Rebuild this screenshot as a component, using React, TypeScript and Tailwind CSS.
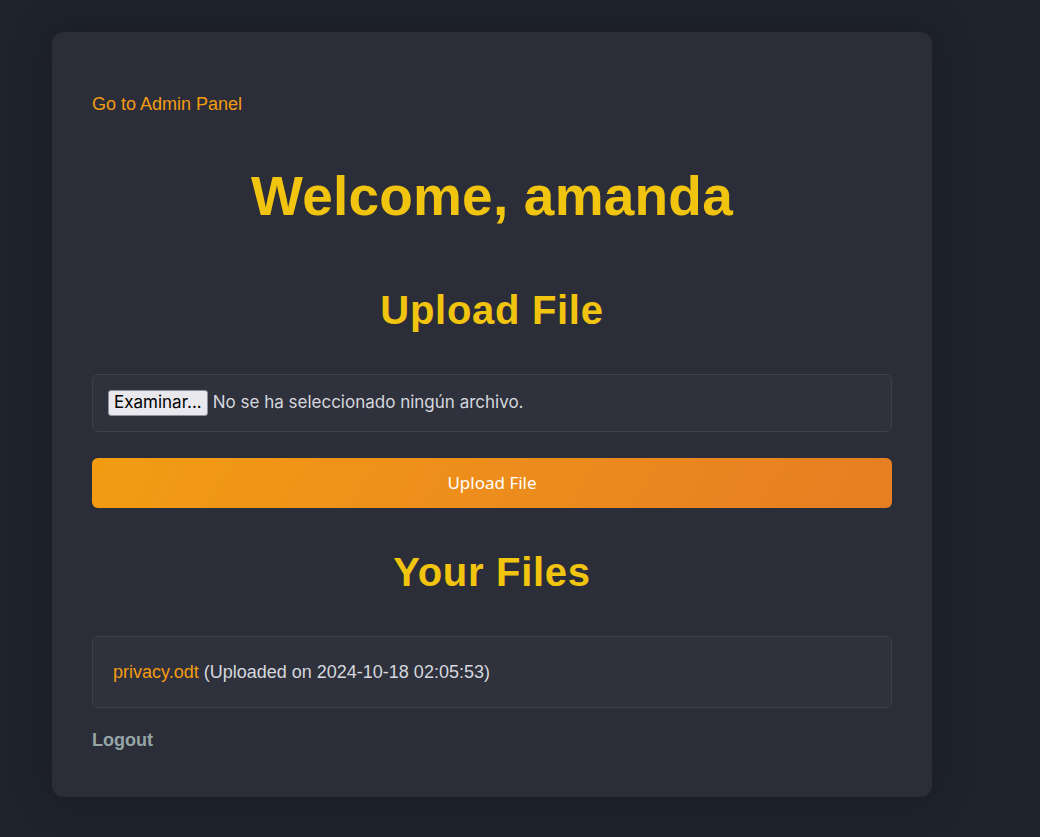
const files = [{ name: "privacy.odt", uploaded: "2024-10-18 02:05:53" }]

const App = () => {
  return (
    <div className="min-h-[837px] w-full bg-[#1f232d] pt-8 pb-10 font-['Liberation_Sans',Arial,sans-serif]">
      <div className="ml-[52px] flex w-[880px] flex-col rounded-xl bg-[#2b2d38] px-10 pt-[62px] pb-[46px] shadow-[0_0_40px_rgba(0,0,0,0.25)]">
        <a href="#" className="self-start text-[18px] leading-[21px] text-[#f39c12]">
          Go to Admin Panel
        </a>

        <h1 className="mt-[50px] text-center text-[55px] leading-[63px] font-bold tracking-[0.2px] text-[#f1c40f]">
          Welcome, amanda
        </h1>

        <h2 className="mt-[59px] text-center text-[40px] leading-[46px] font-bold tracking-[0.7px] text-[#f1c40f]">
          Upload File
        </h2>

        <div className="mt-[41px] flex h-[58px] items-center gap-[5px] rounded-md border border-[#3e4049] bg-[#2f313c] px-[15px] font-['Inter',sans-serif] text-[17px]">
          <span className="flex h-[26px] items-center rounded-[3px] border border-[#8f8f9d] bg-[#e9e9ed] px-[5px] text-black">
            Examinar...
          </span>
          <span className="text-[#d5d8de]">No se ha seleccionado ningún archivo.</span>
        </div>

        <button className="mt-[26px] h-[50px] rounded-md bg-linear-120 from-[#f39c12] to-[#e67e22] font-['Noto_Sans',sans-serif] text-[17px] text-white">
          Upload File
        </button>

        <h2 className="mt-[41px] text-center text-[40px] leading-[46px] font-bold tracking-[0.7px] text-[#f1c40f]">
          Your Files
        </h2>

        <ul className="mt-[41px] flex flex-col gap-2">
          {files.map((f) => (
            <li
              key={f.name}
              className="flex h-[72px] items-center rounded-md border border-[#3e4049] bg-[#2f313c] px-5 text-[18px] text-[#d5d8de]"
            >
              <a href="#" className="text-[#f39c12]">
                {f.name}
              </a>
              <span className="ml-[5px]">(Uploaded on {f.uploaded})</span>
            </li>
          ))}
        </ul>

        <a href="#" className="mt-[22px] self-start text-[18px] leading-[21px] font-bold text-[#95a5a6]">
          Logout
        </a>
      </div>
    </div>
  )
}

export default App
